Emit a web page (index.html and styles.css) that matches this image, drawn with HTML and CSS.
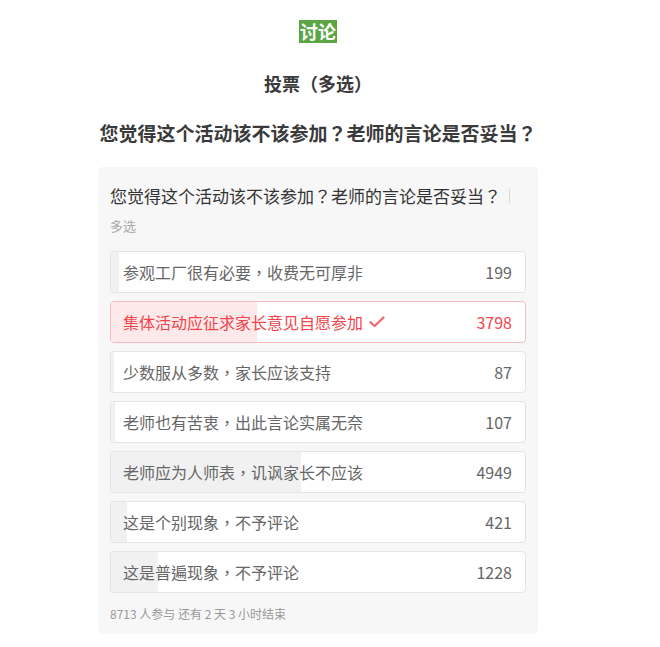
FILE: index.html
```html
<!DOCTYPE html>
<html>
<head>
<meta charset="utf-8">
<title>投票</title>
<link rel="stylesheet" href="styles.css">
</head>
<body>
<div class="page">
  <div class="badge-row"><span class="badge">讨论</span></div>
  <h2 class="subtitle">投票（多选）</h2>
  <h1 class="title">您觉得这个活动该不该参加？老师的言论是否妥当？</h1>
  <div class="card">
    <div class="question">您觉得这个活动该不该参加？老师的言论是否妥当？<span class="pipe"></span></div>
    <div class="type">多选</div>
    <ul class="options">
      <li class="option"><span class="bar" style="width:1.84%"></span><span class="label">参观工厂很有必要，收费无可厚非</span><span class="count">199</span></li>
      <li class="option selected"><span class="bar" style="width:35.2%"></span><span class="label">集体活动应征求家长意见自愿参加<svg class="check" width="16" height="12" viewBox="0 0 16 12"><path d="M1.5 6.2 L5.6 10 L14.5 1.5" fill="none" stroke="currentColor" stroke-width="2.2" stroke-linecap="round" stroke-linejoin="round"/></svg></span><span class="count">3798</span></li>
      <li class="option"><span class="bar" style="width:0.81%"></span><span class="label">少数服从多数，家长应该支持</span><span class="count">87</span></li>
      <li class="option"><span class="bar" style="width:0.99%"></span><span class="label">老师也有苦衷，出此言论实属无奈</span><span class="count">107</span></li>
      <li class="option"><span class="bar" style="width:45.87%"></span><span class="label">老师应为人师表，讥讽家长不应该</span><span class="count">4949</span></li>
      <li class="option"><span class="bar" style="width:3.9%"></span><span class="label">这是个别现象，不予评论</span><span class="count">421</span></li>
      <li class="option"><span class="bar" style="width:11.38%"></span><span class="label">这是普遍现象，不予评论</span><span class="count">1228</span></li>
    </ul>
    <div class="footer">8713 人参与 还有 2 天 3 小时结束</div>
  </div>
</div>
</body>
</html>
```

FILE: styles.css
```css
* { box-sizing: border-box; }
body {
  margin: 0;
  background: #fff;
  font-family: "Noto Sans CJK TC", "Noto Sans CJK SC", sans-serif;
  color: #333;
}
.page {
  width: 440px;
  margin-left: 98px;
  padding-top: 20px;
}
.badge-row {
  display: flex;
  justify-content: center;
}
.badge {
  background: #5ca544;
  color: #fff;
  font-size: 18px;
  font-weight: bold;
  line-height: 23px;
  height: 23px;
  padding: 0 1px;
}
.subtitle {
  margin: 28px 0 0;
  text-align: center;
  font-size: 18px;
  line-height: 24px;
  font-weight: bold;
  color: #3a3a3a;
}
.title {
  margin: 25px 0 0;
  text-align: center;
  font-size: 19px;
  line-height: 26px;
  font-weight: bold;
  color: #3a3a3a;
  white-space: nowrap;
}
.card {
  margin-top: 21px;
  background: #f7f7f7;
  border-radius: 5px;
  padding: 16px 12px 11px;
}
.question {
  font-size: 17px;
  line-height: 26px;
  color: #333;
  display: flex;
  align-items: center;
  white-space: nowrap;
}
.pipe {
  display: inline-block;
  width: 1px;
  height: 14px;
  background: #d6d6d6;
  margin-left: 8px;
}
.type {
  margin-top: 7px;
  font-size: 13px;
  line-height: 20px;
  color: #aaa;
}
.options {
  list-style: none;
  margin: 15px 0 0;
  padding: 0;
  display: flex;
  flex-direction: column;
  gap: 8px;
}
.option {
  position: relative;
  height: 42px;
  background: #fff;
  border: 1px solid #e3e3e3;
  border-radius: 4px;
  display: flex;
  align-items: center;
  justify-content: space-between;
  padding: 0 13px 0 12px;
  overflow: hidden;
  color: #666;
}
.bar {
  position: absolute;
  left: 0;
  top: 0;
  bottom: 0;
  background: #f1f1f1;
}
.label, .count {
  position: relative;
  font-size: 16px;
  line-height: 22px;
}
.label {
  display: flex;
  align-items: center;
}
.count { color: #666; }
.option.selected {
  border-color: #f7bcbf;
  color: #f2444c;
}
.option.selected .bar { background: #fde9ea; }
.option.selected .count { color: #f2444c; }
.check {
  margin-left: 6px;
  color: #f0646b;
}
.footer {
  margin-top: 12px;
  font-size: 12px;
  line-height: 18px;
  color: #999;
}
```
